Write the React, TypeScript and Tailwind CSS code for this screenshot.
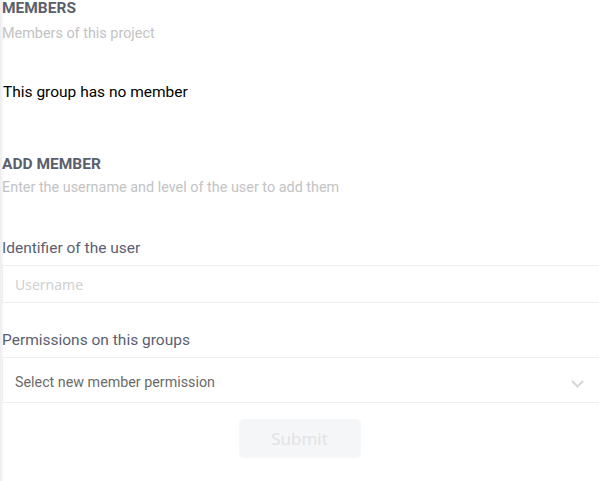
export default function App() {
  return (
    <div className="relative h-[481px] w-[599px] overflow-hidden bg-white font-['Roboto',sans-serif]">
      <div className="absolute inset-y-0 left-0 w-[4px] bg-gradient-to-r from-[#ececf0] to-white" />
      <div className="relative flex flex-col pl-[2px]">
        <h2 className="text-[15.5px] font-bold leading-[16px] text-[#5b5f6d]">MEMBERS</h2>
        <p className="mt-[10px] text-[14.4px] leading-[16px] text-[#c3c3c3]">Members of this project</p>
        <p className="mt-[41px] pl-[1px] text-[15.5px] leading-[18px] text-black">This group has no member</p>

        <h2 className="mt-[55px] text-[15.5px] font-bold leading-[16px] text-[#5b5f6d]">ADD MEMBER</h2>
        <p className="mt-[8px] text-[14.4px] leading-[16px] text-[#c3c3c3]">
          Enter the username and level of the user to add them
        </p>

        <label className="mt-[43px] text-[15.5px] leading-[18px] text-[#5b6070]">Identifier of the user</label>
        <div className="mt-[8px] flex h-[38px] w-[640px] items-center border border-[#efefef] px-[12px]">
          <span className="font-['Noto_Sans',sans-serif] text-[14px] text-[#cfcfcf]">Username</span>
        </div>

        <label className="mt-[28px] text-[15.5px] leading-[18px] text-[#5b6070]">Permissions on this groups</label>
        <div className="mt-[8px] flex h-[46px] w-[608px] items-center justify-between border border-[#efefef] pl-[12px] pr-[25px] pt-[5px]">
          <span className="whitespace-nowrap text-[14.3px] text-[#6b6b6b]">Select new member permission</span>
          <svg width="13" height="8" viewBox="0 0 13 8" className="mt-[3px]" fill="none">
            <polyline points="1,1 6.5,6.5 12,1" stroke="#d6d6d6" strokeWidth="2" />
          </svg>
        </div>

        <div className="mt-[16px] flex justify-center pr-[2px]">
          <button className="flex h-[39px] w-[122px] items-center justify-center rounded-[5px] bg-[#f5f6f8] font-['Noto_Sans',sans-serif] text-[17px] text-[#e2e2e4]">
            Submit
          </button>
        </div>
      </div>
    </div>
  )
}
